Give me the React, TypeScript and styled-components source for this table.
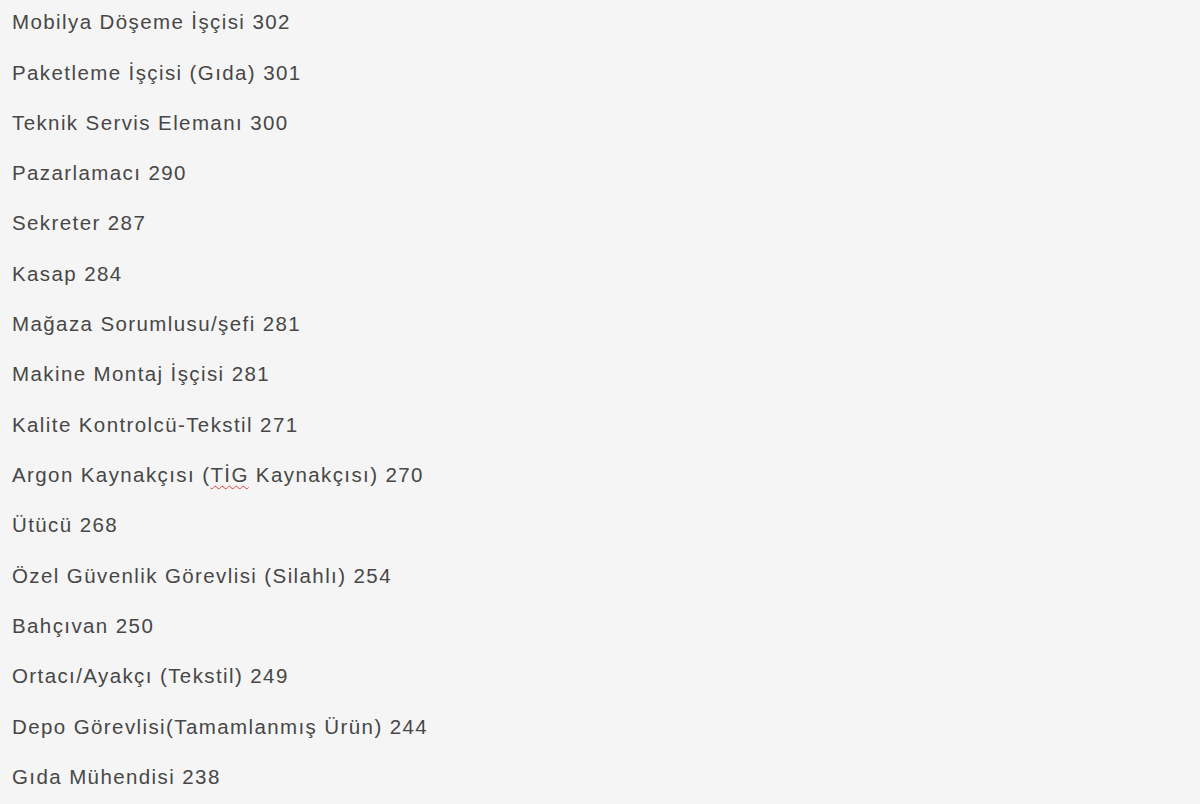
import styled, { createGlobalStyle } from "styled-components";

const GlobalStyle = createGlobalStyle`
  html, body {
    margin: 0;
    padding: 0;
    background: #f5f5f5;
  }
`;

const Page = styled.div`
  min-height: 804px;
  background: #f5f5f5;
  padding: 0 0 0 12px;
  font-family: "Liberation Sans", Arial, sans-serif;
`;

const List = styled.ul`
  list-style: none;
  margin: 0;
  padding: 0;
`;

const Row = styled.li`
  padding: 10.2px 0 16.13px;
  font-size: 20.5px;
  line-height: 24px;
  letter-spacing: 1.4px;
  color: #474747;
  white-space: nowrap;
`;

const Misspelled = styled.span`
  text-decoration-line: underline;
  text-decoration-style: wavy;
  text-decoration-color: #e0403a;
  text-decoration-thickness: 1px;
  text-underline-offset: 3px;
`;

const JOBS: { title: React.ReactNode; count: number }[] = [
  { title: "Mobilya Döşeme İşçisi", count: 302 },
  { title: "Paketleme İşçisi (Gıda)", count: 301 },
  { title: "Teknik Servis Elemanı", count: 300 },
  { title: "Pazarlamacı", count: 290 },
  { title: "Sekreter", count: 287 },
  { title: "Kasap", count: 284 },
  { title: "Mağaza Sorumlusu/şefi", count: 281 },
  { title: "Makine Montaj İşçisi", count: 281 },
  { title: "Kalite Kontrolcü-Tekstil", count: 271 },
  {
    title: (
      <>
        Argon Kaynakçısı (<Misspelled>TİG</Misspelled> Kaynakçısı)
      </>
    ),
    count: 270,
  },
  { title: "Ütücü", count: 268 },
  { title: "Özel Güvenlik Görevlisi (Silahlı)", count: 254 },
  { title: "Bahçıvan", count: 250 },
  { title: "Ortacı/Ayakçı (Tekstil)", count: 249 },
  { title: "Depo Görevlisi(Tamamlanmış Ürün)", count: 244 },
  { title: "Gıda Mühendisi", count: 238 },
];

export default function App() {
  return (
    <>
      <GlobalStyle />
      <Page>
        <List>
          {JOBS.map((job, i) => (
            <Row key={i}>
              {job.title} {job.count}
            </Row>
          ))}
        </List>
      </Page>
    </>
  );
}
